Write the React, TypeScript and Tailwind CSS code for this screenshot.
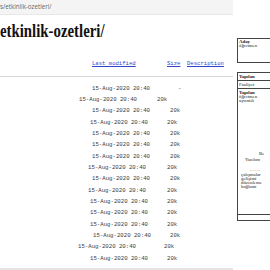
import React from "react";

const rows = [
  { pl: "pl-[92px] w-[178px]", size: "-" },
  { pl: "pl-[79px] w-[157px]", size: "20k" },
  { pl: "pl-[92px] w-[170px]", size: "20k" },
  { pl: "pl-[90px] w-[167px]", size: "20k" },
  { pl: "pl-[92px] w-[170px]", size: "20k" },
  { pl: "pl-[92px] w-[170px]", size: "20k" },
  { pl: "pl-[92px] w-[170px]", size: "20k" },
  { pl: "pl-[88px] w-[167px]", size: "20k" },
  { pl: "pl-[92px] w-[170px]", size: "20k" },
  { pl: "pl-[88px] w-[167px]", size: "20k" },
  { pl: "pl-[90px] w-[167px]", size: "20k" },
  { pl: "pl-[90px] w-[167px]", size: "20k" },
  { pl: "pl-[90px] w-[167px]", size: "20k" },
  { pl: "pl-[93px] w-[170px]", size: "20k" },
  { pl: "pl-[78px] w-[164px]", size: "20k" },
  { pl: "pl-[90px] w-[167px]", size: "20k" },
];

const mono = "font-['Liberation_Mono',monospace]";
const serif = "font-['Liberation_Serif',serif]";

export default function App() {
  return (
    <div className="w-[270px] h-[270px] overflow-hidden bg-white flex">
      <div className="w-[233px] shrink-0 flex flex-col">
        <div className="h-[16px] bg-[#f4f4f4] border-b border-[#e8e8e8] flex items-center text-[6.2px] text-[#666] font-['Open_Sans',sans-serif] leading-none">
          s/etkinlik-ozetleri/
        </div>
        <div className={`mt-[6px] h-[19px] ${serif} font-bold text-[19px] leading-none text-[#111] whitespace-nowrap`}>
          <span className="inline-block origin-left scale-x-[0.78]">etkinlik-ozetleri/</span>
        </div>
        <div className={`mt-[20px] h-[8px] flex items-center ${mono} text-[5.6px] leading-none text-[#3344cc] whitespace-nowrap`}>
          <span className="pl-[92px] w-[167px] shrink-0 underline">Last modified</span>
          <span className="w-[20px] shrink-0 underline">Size</span>
          <span className="underline">Description</span>
        </div>
        <div className="mt-[8px] h-[1px] bg-[#d8d8d8]" />
        <div className={`mt-[6px] flex flex-col ${mono} text-[5.7px] leading-none text-[#3a3a3a]`}>
          {rows.map((r, i) => (
            <div key={i} className="h-[11.33px] flex items-center whitespace-nowrap">
              <span className={`${r.pl} shrink-0`}>15-Aug-2020 20:40</span>
              <span>{r.size}</span>
            </div>
          ))}
        </div>
        <div className="mt-[4px] h-[2px] bg-[#e4e4e4]" />
      </div>
      <div className={`ml-[4px] w-[60px] shrink-0 flex flex-col ${serif} text-[#222] text-[4.8px] leading-[4px]`}>
        <div className="mt-[38px] h-[25px] border border-[#444] px-[1px] pt-[1px]">
          <div className="font-bold">Aday</div>
          <div>öğretmen</div>
        </div>
        <div className="mt-[9px] h-[143px] border border-[#444] flex flex-col">
          <div className="h-[8px] border-b border-[#444] px-[1px] flex items-center font-bold">Yapılan</div>
          <div className="h-[8px] border-b border-[#444] px-[1px] flex items-center">Faaliyet</div>
          <div className="px-[1px] pt-[2px] flex flex-col">
            <div className="font-bold">Yapılan</div>
            <div>öğretmen</div>
            <div>ayrıntılı</div>
            <div className="mt-[49px] pl-[20px]">Be</div>
            <div className="mt-[2px] pl-[6px]">Yazılım</div>
            <div className="mt-[6px] pl-[11px] tracking-[1px]">.....</div>
            <div className="mt-[1px] pl-[2px]">çalışmalar</div>
            <div className="pl-[2px]">gelişimi</div>
            <div className="pl-[2px]">düzenleme</div>
            <div className="pl-[2px]">bağlantı</div>
          </div>
        </div>
        <div className="h-[6px] border-x border-b border-[#444]" />
      </div>
    </div>
  );
}
